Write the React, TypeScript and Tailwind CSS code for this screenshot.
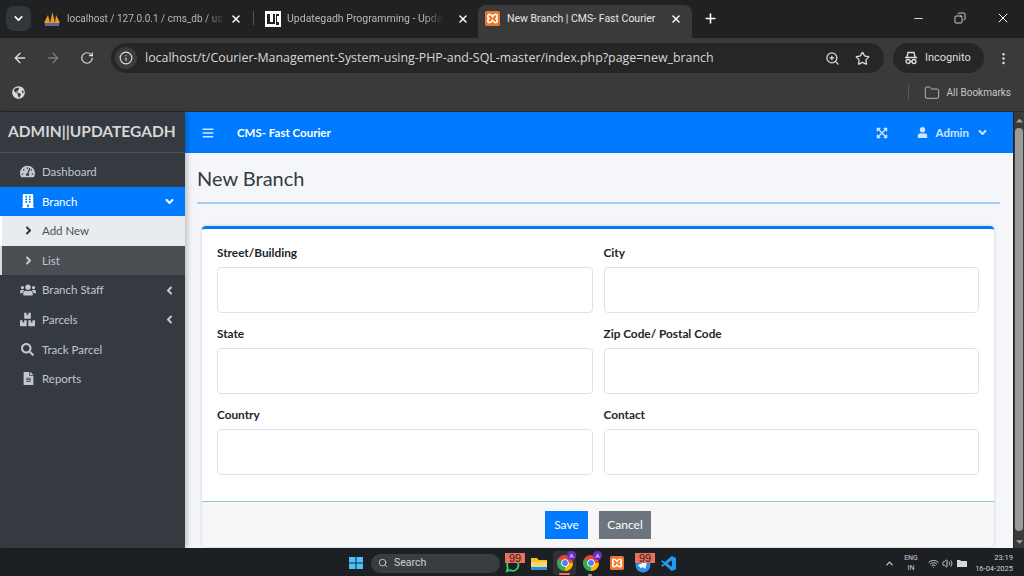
import { ArrowLeft, ArrowRight, RotateCw, Info, ZoomIn, Star, MoreVertical, Folder, X, Plus, Minus, Copy, ChevronDown, ChevronUp, Search, Wifi, Volume2 } from "lucide-react"
import { FaTachometerAlt, FaBuilding, FaAngleRight, FaAngleDown, FaAngleLeft, FaUsers, FaBoxes, FaSearch, FaFileAlt, FaBars, FaExpandArrowsAlt, FaUser, FaGlobeAmericas, FaCaretUp, FaCaretDown } from "react-icons/fa"

function Xampp({ size = 15 }: { size?: number }) {
  return (
    <svg width={size} height={size} viewBox="0 0 16 16">
      <rect width="16" height="16" rx="2" fill="#f0762b" />
      <path d="M3 5.500C3 3 6 3 8 6c2-3 5-3 5-.5S11 8 11 8s2 0 2 2.500-3 2.500-5-.5c-2 3-5 3-5 .5S5 8 5 8 3 8 3 5.500z" fill="none" stroke="#fff" strokeWidth="1.800" />
    </svg>
  )
}

function Chrome({ size = 16 }: { size?: number }) {
  return (
    <svg width={size} height={size} viewBox="0 0 16 16">
      <circle cx="8" cy="8" r="8" fill="#e8453c" />
      <path d="M8 8 1.100 4A8 8 0 0 0 8 16z" fill="#34a853" />
      <path d="M8 8h8A8 8 0 0 1 8 16z" fill="#fbbc05" />
      <circle cx="8" cy="8" r="3.800" fill="#fff" />
      <circle cx="8" cy="8" r="2.900" fill="#4285f4" />
    </svg>
  )
}

function ChromeApp({ active }: { active?: boolean }) {
  return (
    <div className={`relative w-[23px] h-[24px] flex items-center justify-center rounded ${active ? "bg-[#2e3236]" : ""}`}>
      <Chrome />
      <span className="absolute right-0 top-0 w-[9px] h-[9px] rounded-full bg-[#6a2fc0] text-[6px] leading-[9px] text-center text-white">A</span>
      {active ? <span className="absolute bottom-0 left-[6px] w-[11px] h-[2px] bg-[#f0765a] rounded" /> : <span className="absolute -bottom-px left-[9px] w-[4px] h-[2px] bg-[#9a9a9a] rounded" />}
    </div>
  )
}

function Badge() {
  return <span className="absolute left-[4px] top-[2px] w-[20px] text-center bg-[#e8705c] text-[#3a1a14] text-[11px] leading-[10px] font-['Liberation_Sans',sans-serif]">99</span>
}

function NavRow({ icon, label, caret, cls }: { icon: React.ReactNode; label: string; caret?: React.ReactNode; cls?: string }) {
  return (
    <div className={`h-[29.6px] flex items-center pr-[9px] ${cls ?? "text-[#c2c7d0]"}`}>
      <span className="w-[42px] pl-[20px] shrink-0 flex items-center">{icon}</span>
      <span className="text-[11.5px] leading-none flex-1">{label}</span>
      {caret}
    </div>
  )
}

function Field({ label }: { label: string }) {
  return (
    <div>
      <label className="block text-[11.8px] leading-[16px] font-bold text-[#212529] mb-[6px]">{label}</label>
      <div className="h-[46px] bg-white border border-[#dfe3e7] rounded-[4px]" />
    </div>
  )
}

export default function App() {
  return (
    <div className="w-[1024px] h-[576px] overflow-hidden flex flex-col bg-[#3a3a3a] font-['Lato',sans-serif]">
      {/* tab strip */}
      <div className="h-[38px] shrink-0 bg-[#1f2122] flex items-end text-[#c8c8c8] text-[10.5px] font-['Roboto',sans-serif]">
        <div className="self-start mt-[6px] ml-[6px] w-[25px] h-[25px] rounded-lg bg-[#34373a] flex items-center justify-center shrink-0">
          <ChevronDown size={13} strokeWidth={3} className="text-white" />
        </div>
        <div className="w-[222px] h-[33px] pb-[6px] flex items-center pl-[13px] shrink-0">
          <svg width="16" height="16" viewBox="0 0 16 16" className="shrink-0">
            <path d="M0 12 4 4l2 8zM6 12 8.500 1 11 12zM11 12l1-8 4 8z" fill="#f29a1f" />
            <rect x="1" y="12" width="14" height="3" fill="#5a6a9a" />
          </svg>
          <span className="ml-[7px] w-[158px] text-[10px] whitespace-nowrap text-[#b8b8b8] [mask-image:linear-gradient(to_right,#000_88%,transparent)]">localhost / 127.0.0.1 / cms_db / us</span>
          <X size={12} strokeWidth={3} className="ml-[5px] text-white shrink-0" />
        </div>
        <div className="self-start mt-[11px] w-px h-[14px] bg-[#555] shrink-0" />
        <div className="w-[221px] h-[33px] pb-[6px] flex items-center pl-[11px] shrink-0">
          <svg width="16" height="16" viewBox="0 0 16 16" className="shrink-0">
            <rect width="16" height="16" fill="#fff" />
            <path d="M2 3h3v8h3V3h2v10H2zM11 3h3v2h-2v6h2v3h-3z" fill="#222" />
          </svg>
          <span className="ml-[6px] w-[156px] whitespace-nowrap text-[#b8b8b8] [mask-image:linear-gradient(to_right,#000_88%,transparent)]">Updategadh Programming - Upda</span>
          <X size={12} strokeWidth={3} className="ml-[14px] text-white shrink-0" />
        </div>
        <div className="w-[214px] h-[33px] pb-[6px] ml-[3px] rounded-t-lg bg-[#3a3a3a] flex items-center pl-[7px] shrink-0">
          <Xampp />
          <span className="ml-[7px] w-[163px] whitespace-nowrap text-[#e6e6e6]">New Branch | CMS- Fast Courier</span>
          <X size={12} strokeWidth={3} className="text-white shrink-0" />
        </div>
        <div className="h-[33px] pb-[6px] flex items-center ml-[11px]">
          <Plus size={15} strokeWidth={2.500} className="text-white" />
        </div>
        <div className="h-[38px] pb-[2px] flex-1 flex items-center justify-end pr-[13px] gap-[29px] text-white">
          <Minus size={13} strokeWidth={1.500} />
          <Copy size={12} strokeWidth={1.500} className="-scale-x-100" />
          <X size={16} strokeWidth={1.500} />
        </div>
      </div>

      {/* toolbar */}
      <div className="h-[40px] shrink-0 flex items-center pl-[12px] text-[#dedede]">
        <ArrowLeft size={16} />
        <ArrowRight size={16} className="ml-[17px] text-[#7b7b7b]" />
        <RotateCw size={14} className="ml-[19px]" />
        <div className="ml-[17px] w-[773px] h-[30px] rounded-full bg-[#262626] flex items-center pl-[4px] pr-[14px]">
          <span className="w-[22px] h-[22px] rounded-full bg-[#3c3c3c] flex items-center justify-center shrink-0">
            <Info size={14} />
          </span>
          <span className="ml-[8px] flex-1 text-[12.4px] font-['Open_Sans',sans-serif] whitespace-nowrap text-[#d8d8d8]">localhost/t/Courier-Management-System-using-PHP-and-SQL-master/index.php?page=new_branch</span>
          <ZoomIn size={15} className="shrink-0" />
          <Star size={15} className="ml-[15px] shrink-0" />
        </div>
        <div className="ml-[9px] w-[91px] h-[30px] rounded-full bg-[#262626] flex items-center pl-[11px] text-[11px] font-['Roboto',sans-serif]">
          <svg width="14" height="14" viewBox="0 0 14 14" fill="none" stroke="currentColor" strokeWidth="1.300">
            <path d="M1 6.500h12M3 6 4 1.500h6L11 6" />
            <circle cx="4" cy="10.500" r="2" />
            <circle cx="10" cy="10.500" r="2" />
            <path d="M6 10.500h2" />
          </svg>
          <span className="ml-[7px]">Incognito</span>
        </div>
        <MoreVertical size={15} className="ml-[12px]" />
      </div>

      {/* bookmarks bar */}
      <div className="h-[34px] pb-[4px] shrink-0 flex items-center pl-[12px] text-[#c6c6c6] border-b border-[#2a2a2a]">
        <FaGlobeAmericas size={13} className="text-[#d8d8d8]" />
        <div className="ml-auto w-px h-[15px] bg-[#5a5a5a]" />
        <Folder size={16} strokeWidth={1.300} className="ml-[15px]" />
        <span className="ml-[7px] mr-[13px] text-[10px] font-['Roboto',sans-serif]">All Bookmarks</span>
      </div>

      {/* page */}
      <div className="h-[436px] shrink-0 flex">
        <aside className="w-[185px] shrink-0 bg-[#343a40] shadow-[2px_0_6px_rgba(0,0,0,0.25)] z-10">
          <div className="h-[41px] flex items-center pl-[8px] border-b border-[#4b545c] text-[#d6d6d6] text-[15.5px] font-bold whitespace-nowrap">ADMIN||UPDATEGADH</div>
          <nav className="pt-[4px]">
            <NavRow icon={<FaTachometerAlt size={15} />} label="Dashboard" />
            <NavRow icon={<FaBuilding size={14} className="ml-px" />} label="Branch" cls="bg-[#007bff] text-white" caret={<FaAngleDown size={13} />} />
            <NavRow icon={<FaAngleRight size={13} className="ml-[2px] text-[#343a40]" />} label="Add New" cls="bg-[#e9ecef] text-[#4a5057] shadow-[inset_2px_0_0_#fff]" />
            <NavRow icon={<FaAngleRight size={13} className="ml-[2px]" />} label="List" cls="bg-[#494e53] text-[#c2c7d0] shadow-[inset_2px_0_0_#d8dbdf]" />
            <NavRow icon={<FaUsers size={16} />} label="Branch Staff" caret={<FaAngleLeft size={13} />} />
            <NavRow icon={<FaBoxes size={15} />} label="Parcels" caret={<FaAngleLeft size={13} />} />
            <NavRow icon={<FaSearch size={13} className="ml-px" />} label="Track Parcel" />
            <NavRow icon={<FaFileAlt size={13} className="ml-[2px]" />} label="Reports" />
          </nav>
        </aside>

        <main className="flex-1 min-w-0 flex flex-col bg-[#f4f6f9]">
          <header className="h-[41px] shrink-0 bg-[#007bff] flex items-center pl-[17px] text-[#cfe4ff]">
            <FaBars size={12} />
            <span className="ml-[23px] flex-1 text-[11.5px] font-bold text-white">CMS- Fast Courier</span>
            <FaExpandArrowsAlt size={12} />
            <FaUser size={11} className="ml-[29px]" />
            <span className="ml-[8px] text-[11.5px] font-bold">Admin</span>
            <FaAngleDown size={13} className="ml-[7px] mr-[24px]" />
          </header>
          <div className="pl-[12px] pr-[13px] pt-[10px]">
            <h1 className="text-[20px] leading-[30px] text-[#343a40] pb-[9px] border-b-2 border-[#a9cff8]">New Branch</h1>
          </div>
          <div className="ml-[17px] mr-[19px] mt-[22px] mb-px flex-1 bg-white border-t-[3px] border-[#007bff] rounded-[4px] shadow-[0_0_3px_rgba(0,0,0,0.2)] flex flex-col">
            <div className="flex-1 grid grid-cols-2 gap-x-[11px] gap-y-[13px] content-start px-[15px] pt-[16px]">
              <Field label="Street/Building" />
              <Field label="City" />
              <Field label="State" />
              <Field label="Zip Code/ Postal Code" />
              <Field label="Country" />
              <Field label="Contact" />
            </div>
            <div className="h-[46px] bg-[#f7f7f7] border-t border-[#8ccbcb] rounded-b-[4px] flex items-center justify-center gap-[11px] text-[12px] text-white">
              <button className="w-[43px] h-[28px] bg-[#007bff]">Save</button>
              <button className="w-[52px] h-[28px] bg-[#6c757d]">Cancel</button>
            </div>
          </div>
        </main>

        <div className="w-[11px] shrink-0 bg-[#3a3a3a] flex flex-col items-center text-[#a0a0a0] border-l border-[#222]">
          <FaCaretUp size={11} className="shrink-0 mt-[3px]" />
          <div className="mt-[2px] w-[8px] flex-1 mb-[5px] rounded-full bg-[#9a9a9a]" />
          <FaCaretDown size={11} className="shrink-0 mb-[1px]" />
        </div>
      </div>

      {/* taskbar */}
      <div className="flex-1 bg-[#1c2024] flex items-center text-[#d0d0d0] pl-[349px] pt-[2px]">
        <svg width="14" height="14" viewBox="0 0 14 14" className="shrink-0">
          <path d="M0 1h6.500v5.500H0zM7.500 1H14v5.500H7.500zM0 7.500h6.500V13H0zM7.500 7.500H14V13H7.500z" fill="#4cc2ff" />
        </svg>
        <div className="ml-[8px] w-[129px] h-[19px] rounded-full bg-[#3a3d40] flex items-center pl-[7px] text-[10.5px] shrink-0 font-['Roboto',sans-serif]">
          <Search size={10} />
          <span className="ml-[6px]">Search</span>
        </div>
        <div className="ml-[1px] flex items-center gap-[3px]">
          <div className="relative w-[23px] h-[24px] flex items-center justify-center">
            <svg width="15" height="15" viewBox="0 0 16 16" fill="none" stroke="#25d366" strokeWidth="2" className="mt-[5px]">
              <path d="M2 14l1-3.500A6 6 0 1 1 5.500 13z" />
            </svg>
            <Badge />
          </div>
          <div className="w-[23px] h-[24px] flex items-center justify-center">
            <svg width="16" height="14" viewBox="0 0 16 14">
              <path d="M0 2h6l1.500 2H16v10H0z" fill="#fcc419" />
              <rect y="6" width="16" height="8" fill="#f7d774" />
              <rect y="11" width="16" height="3" fill="#2b8fd8" />
            </svg>
          </div>
          <ChromeApp active />
          <ChromeApp />
          <div className="w-[23px] h-[24px] flex items-center justify-center"><Xampp size={14} /></div>
          <div className="relative w-[23px] h-[24px] flex items-center justify-center">
            <svg width="16" height="16" viewBox="0 0 16 16" className="mt-[3px]">
              <circle cx="8" cy="8" r="7.500" fill="#2f8fe6" />
              <path d="M3 8l9-4-1.500 8-3-2-1.500 1.500z" fill="#e8f4ff" />
            </svg>
            <Badge />
          </div>
          <div className="w-[23px] h-[24px] flex items-center justify-center">
            <svg width="15" height="15" viewBox="0 0 16 16">
              <path d="M11.500 0 16 2v12l-4.500 2L4 9.500 1.500 11.500 0 10.500 3 8 0 5.500 1.500 4.500 4 6.500z" fill="#1f9cf0" />
              <path d="M11.500 4.500 7 8l4.500 3.500z" fill="#1c2024" />
            </svg>
          </div>
        </div>
        <div className="ml-auto flex items-center pr-[11px] font-['Roboto',sans-serif]">
          <ChevronUp size={11} strokeWidth={2.500} />
          <div className="ml-[5px] w-[22px] text-center text-[7px] leading-[10px]">
            <div>ENG</div>
            <div>IN</div>
          </div>
          <Wifi size={11} className="ml-[6px]" />
          <Volume2 size={11} className="ml-[3px]" />
          <svg width="11" height="9" viewBox="0 0 11 9" className="ml-[4px]">
            <path d="M0 1h3l1 1h6v6H0z" fill="#d8d8d8" />
          </svg>
          <div className="ml-[7px] text-right text-[7.5px] leading-[11px] w-[38px] whitespace-nowrap">
            <div>23:19</div>
            <div>16-04-2025</div>
          </div>
        </div>
      </div>
    </div>
  )
}
